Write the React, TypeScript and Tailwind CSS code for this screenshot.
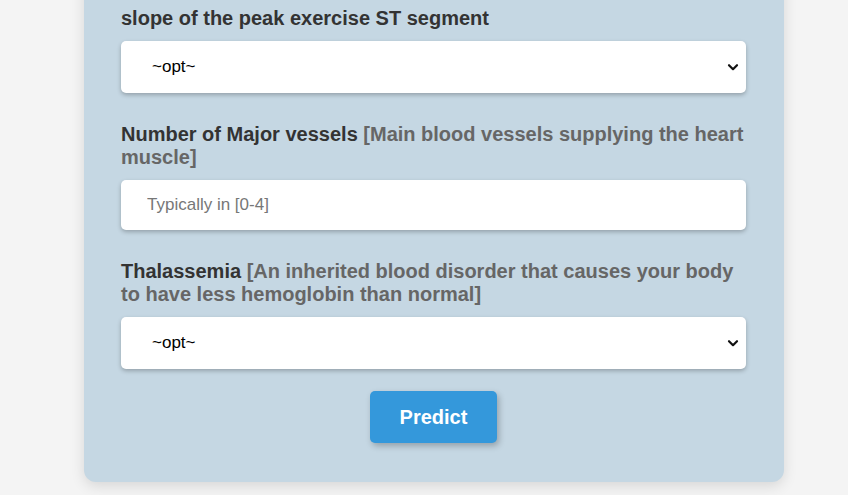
import { useState } from 'react';

function Chevron() {
  return (
    <svg
      className="pointer-events-none absolute right-[7px] top-1/2 -translate-y-1/2"
      width="12"
      height="12"
      viewBox="0 0 12 12"
      fill="none"
    >
      <path d="M2 4.2l4 4 4-4" stroke="#111" strokeWidth="2.2" strokeLinecap="round" strokeLinejoin="round" />
    </svg>
  );
}

function Label({ main, hint }: { main: string; hint?: string }) {
  return (
    <label className="block text-[20px] font-bold leading-[23px] text-[#333] mb-[11px]">
      {main}
      {hint && <span className="text-[#666]"> {hint}</span>}
    </label>
  );
}

function Select({ value, onChange }: { value: string; onChange: (v: string) => void }) {
  return (
    <div className="relative">
      <select
        value={value}
        onChange={(e) => onChange(e.target.value)}
        className="block w-full h-[52px] appearance-none rounded-[5px] bg-white pl-[31px] pr-8 text-[17px] text-black shadow-[0_2px_4px_rgba(0,0,0,0.25)] outline-none"
      >
        <option value="">~opt~</option>
        <option value="0">0</option>
        <option value="1">1</option>
        <option value="2">2</option>
      </select>
      <Chevron />
    </div>
  );
}

export default function App() {
  const [slope, setSlope] = useState('');
  const [vessels, setVessels] = useState('');
  const [thal, setThal] = useState('');

  return (
    <div className="h-[495px] overflow-hidden bg-[#f4f4f4] flex flex-col font-['Liberation_Sans',Arial,sans-serif]">
      <div className="ml-[84px] w-[700px] mt-[-30px] rounded-[12px] bg-[#c5d7e3] pl-[37px] pr-[38px] pt-[37px] pb-[39px] shadow-[0_4px_14px_rgba(0,0,0,0.12)]">
        {/* slope */}
        <Label main="slope of the peak exercise ST segment" />
        <Select value={slope} onChange={setSlope} />

        {/* vessels */}
        <div className="mt-[30px]">
          <Label main="Number of Major vessels" hint="[Main blood vessels supplying the heart muscle]" />
          <input
            type="text"
            value={vessels}
            onChange={(e) => setVessels(e.target.value)}
            placeholder="Typically in [0-4]"
            className="block w-full h-[50px] rounded-[5px] bg-white px-[26px] text-[17px] text-black placeholder-[#777] shadow-[0_2px_4px_rgba(0,0,0,0.25)] outline-none"
          />
        </div>

        {/* thal */}
        <div className="mt-[30px]">
          <Label main="Thalassemia" hint="[An inherited blood disorder that causes your body to have less hemoglobin than normal]" />
          <Select value={thal} onChange={setThal} />
        </div>

        <div className="mt-[22px] flex justify-center">
          <button className="w-[127px] h-[52px] rounded-[5px] bg-[#3498db] text-white text-[20px] font-bold shadow-[2px_3px_6px_rgba(0,0,0,0.25)]">
            Predict
          </button>
        </div>
      </div>
    </div>
  );
}
